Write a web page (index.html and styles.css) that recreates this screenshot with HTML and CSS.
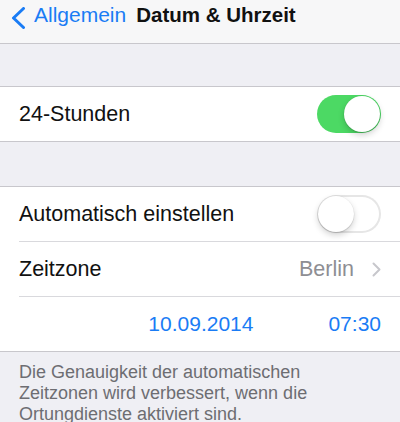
FILE: index.html
```html
<!DOCTYPE html>
<html lang="de">
<head>
<meta charset="utf-8">
<title>Datum &amp; Uhrzeit</title>
<link rel="stylesheet" href="styles.css">
</head>
<body>
  <header class="navbar">
    <a class="back" href="#">
      <svg class="back-chevron" width="16" height="22" viewBox="0 0 16 22" aria-hidden="true">
        <path d="M13.5 1.5 L3.5 11 L13.5 20.5" fill="none" stroke="#1a7cf5" stroke-width="3" stroke-linecap="round" stroke-linejoin="round"/>
      </svg>
      <span class="back-label">Allgemein</span>
    </a>
    <h1 class="nav-title">Datum &amp; Uhrzeit</h1>
  </header>

  <main class="content">
    <section class="group">
      <div class="row">
        <span class="row-label">24-Stunden</span>
        <span class="switch switch-on"><span class="knob"></span></span>
      </div>
    </section>

    <section class="group">
      <div class="row">
        <span class="row-label">Automatisch einstellen</span>
        <span class="switch switch-off"><span class="knob"></span></span>
      </div>
      <div class="row">
        <span class="row-label">Zeitzone</span>
        <span class="row-detail">Berlin</span>
        <svg class="disclosure" width="9" height="15" viewBox="0 0 9 15" aria-hidden="true">
          <path d="M1.5 1.5 L7.5 7.5 L1.5 13.5" fill="none" stroke="#c7c7cc" stroke-width="2" stroke-linecap="round" stroke-linejoin="round"/>
        </svg>
      </div>
      <div class="row row-datetime">
        <span class="date">10.09.2014</span>
        <span class="time">07:30</span>
      </div>
    </section>

    <p class="footer-note">Die Genauigkeit der automatischen Zeitzonen wird verbessert, wenn die Ortungdienste aktiviert sind.</p>
  </main>
</body>
</html>
```

FILE: styles.css
```css
* {
  box-sizing: border-box;
}

html,
body {
  margin: 0;
  padding: 0;
}

body {
  width: 400px;
  height: 422px;
  overflow: hidden;
  background: #efeff4;
  font-family: "Liberation Sans", Arial, Helvetica, sans-serif;
  color: #111;
}

/* Navigation bar */
.navbar {
  height: 44px;
  background: #f7f7f8;
  border-bottom: 1px solid #c8c7cc;
  display: flex;
  align-items: flex-start;
  padding-left: 10px;
}

.back {
  display: flex;
  align-items: flex-start;
  text-decoration: none;
  color: #1a7cf5;
}

.back-chevron {
  margin-top: 7px;
  flex: none;
}

.back-label {
  margin-left: 8px;
  font-size: 21px;
  line-height: 30px;
}

.nav-title {
  margin: 0 0 0 10px;
  font-size: 20.5px;
  font-weight: bold;
  line-height: 30px;
  color: #111;
}

/* Grouped table */
.content {
  padding-top: 42px;
}

.group {
  background: #fff;
  border-top: 1px solid #c8c7cc;
  border-bottom: 1px solid #c8c7cc;
  padding-left: 19px;
}

.group + .group {
  margin-top: 44px;
}

.row {
  height: 55px;
  display: flex;
  align-items: center;
  padding-right: 19px;
  border-top: 1px solid #d9d9dd;
}

.row:first-child {
  height: 54px;
  border-top: none;
}

.row-label {
  flex: 1;
  font-size: 21.5px;
  color: #111;
}

.row-detail {
  font-size: 21.5px;
  color: #8e8e93;
  margin-right: 18px;
}

.disclosure {
  flex: none;
}

.row-datetime {
  justify-content: flex-end;
  gap: 75px;
  font-size: 21px;
  color: #1a7cf5;
}

/* Switches */
.switch {
  position: relative;
  flex: none;
  width: 64px;
  height: 38px;
  border-radius: 19px;
}

.switch-on {
  background: #4cd964;
}

.switch-off {
  background: #fff;
  box-shadow: inset 0 0 0 2px #e6e6e6;
}

.knob {
  position: absolute;
  top: 1px;
  width: 36px;
  height: 36px;
  border-radius: 50%;
  background: #fff;
  box-shadow: 0 3px 6px rgba(0, 0, 0, 0.18), 0 1px 1px rgba(0, 0, 0, 0.12), 0 0 0 0.5px rgba(0, 0, 0, 0.06);
}

.switch-on .knob {
  right: 1px;
}

.switch-off .knob {
  left: 1px;
}

/* Footer text */
.footer-note {
  margin: 0;
  padding: 10px 19px 0 19px;
  font-size: 18px;
  line-height: 21px;
  color: #6d6d72;
  max-width: 340px;
}
```
